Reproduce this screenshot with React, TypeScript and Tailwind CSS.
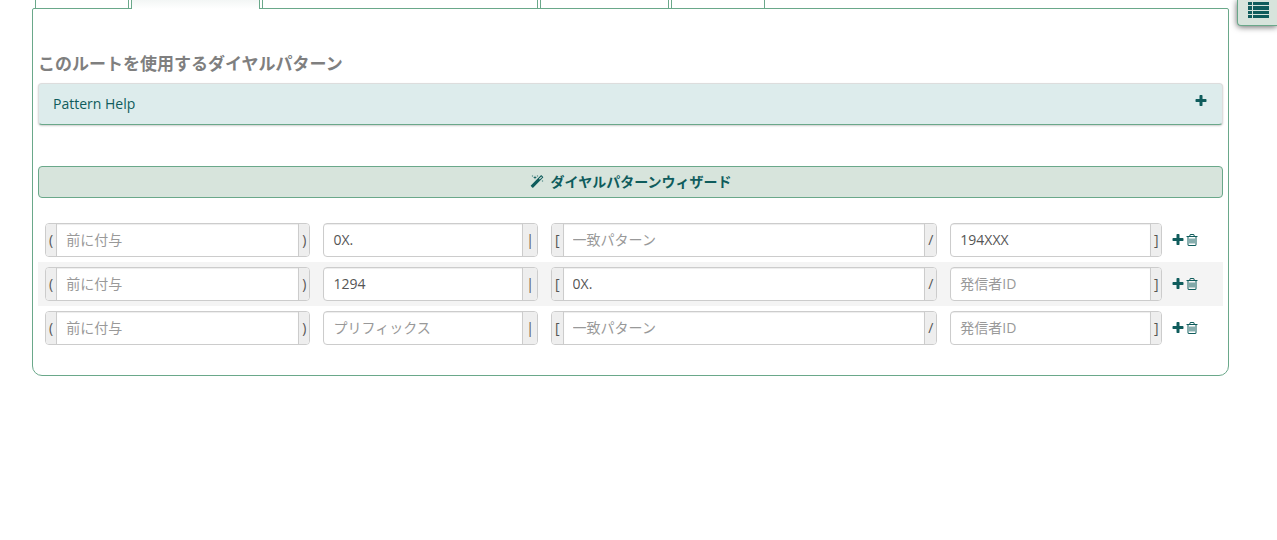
import React from "react";

interface IconProps {
  className?: string;
}

const PlusIcon: React.FC<IconProps> = ({ className }) => (
  <svg className={className} viewBox="0 0 1792 1792" fill="currentColor" aria-hidden="true">
    <path d="M1600 736v192q0 40-28 68t-68 28h-416v416q0 40-28 68t-68 28h-192q-40 0-68-28t-28-68v-416h-416q-40 0-68-28t-28-68v-192q0-40 28-68t68-28h416v-416q0-40 28-68t68-28h192q40 0 68 28t28 68v416h416q40 0 68 28t28 68z" />
  </svg>
);

const TrashIcon: React.FC<IconProps> = ({ className }) => (
  <svg className={className} viewBox="0 0 1792 1792" fill="currentColor" aria-hidden="true">
    <path d="M704 736v576q0 14-9 23t-23 9h-64q-14 0-23-9t-9-23v-576q0-14 9-23t23-9h64q14 0 23 9t9 23zm256 0v576q0 14-9 23t-23 9h-64q-14 0-23-9t-9-23v-576q0-14 9-23t23-9h64q14 0 23 9t9 23zm256 0v576q0 14-9 23t-23 9h-64q-14 0-23-9t-9-23v-576q0-14 9-23t23-9h64q14 0 23 9t9 23zm128 724v-948h-896v948q0 22 7 40.5t14.5 27 10.5 8.5h832q3 0 10.5-8.5t14.5-27 7-40.5zm-672-1076h448l-48-117q-7-9-17-11h-317q-10 2-17 11zm928 32v64q0 14-9 23t-23 9h-96v948q0 83-47 143.5t-113 60.5h-832q-66 0-113-58.5t-47-141.5v-952h-96q-14 0-23-9t-9-23v-64q0-14 9-23t23-9h309l70-167q15-37 54-63t79-26h320q40 0 79 26t54 63l70 167h309q14 0 23 9t9 23z" />
  </svg>
);

const MagicIcon: React.FC<IconProps> = ({ className }) => (
  <svg className={className} viewBox="0 0 1792 1792" fill="currentColor" aria-hidden="true">
    <path d="M1254 581l293-293-107-107-293 293zm447-293q0 27-18 45l-1286 1286q-18 18-45 18t-45-18l-198-198q-18-18-18-45t18-45l1286-1286q18-18 45-18t45 18l198 198q18 18 18 45zm-1351-190l98 30-98 30-30 98-30-98-98-30 98-30 30-98zm350 162l196 60-196 60-60 196-60-196-196-60 196-60 60-196zm930 478l98 30-98 30-30 98-30-98-98-30 98-30 30-98zm-640-640l98 30-98 30-30 98-30-98-98-30 98-30 30-98z" />
  </svg>
);

const ListIcon: React.FC<IconProps> = ({ className }) => (
  <svg className={className} viewBox="0 0 21 16" fill="currentColor" aria-hidden="true">
    <path d="M0 0h4v3H0zM5 0h16v3H5zM0 4h4v4H0zM5 4h16v4H5zM0 9h4v3H0zM5 9h16v3H5zM0 13h4v3H0zM5 13h16v3H5z" />
  </svg>
);

interface FieldProps {
  label: string;
  value: string;
  before?: string;
  after: string;
}

const Field: React.FC<FieldProps> = ({ label, value, before, after }) => (
  <td className="py-[5px] pl-[7px] pr-1.5">
    <div className="flex h-[34px] overflow-hidden rounded border border-[#ccc] bg-white">
      {before && (
        <span className="flex items-center border-r border-[#ccc] bg-[#eee] px-[3px]">{before}</span>
      )}
      <input
        type="text"
        aria-label={label}
        placeholder={label}
        defaultValue={value}
        className="w-0 min-w-0 flex-1 px-[9px] shadow-[inset_0_1px_1px_rgba(0,0,0,0.075)] outline-none placeholder:text-[#999]"
      />
      <span className="flex items-center border-l border-[#ccc] bg-[#eee] px-[3px]">{after}</span>
    </div>
  </td>
);

const tabs = [
  { name: "tab-1", width: "w-[94px]", active: false },
  { name: "tab-2", width: "w-[129px]", active: true },
  { name: "tab-3", width: "w-[276px]", active: false },
  { name: "tab-4", width: "w-[129px]", active: false },
  { name: "tab-5", width: "w-[94px]", active: false },
];

const patterns = [
  { prepend: "", prefix: "0X.", match: "", callerId: "194XXX" },
  { prepend: "", prefix: "1294", match: "0X.", callerId: "" },
  { prepend: "", prefix: "", match: "", callerId: "" },
];

const App: React.FC = () => {
  return (
    <div className="relative min-h-screen bg-white pl-8 pr-12 font-['Open_Sans','Noto_Sans_CJK_JP',sans-serif] text-sm text-[#555]">
      {/* Tabs */}
      <div role="tablist" className="flex h-2 gap-[2px] pl-[3px]">
        {tabs.map((tab) => (
          <button
            key={tab.name}
            type="button"
            role="tab"
            aria-label={tab.name}
            aria-selected={tab.active}
            className={
              tab.active
                ? `${tab.width} z-10 h-[9px] border-x border-[#6aa88a] bg-linear-to-b from-[#f3f6f5] to-white`
                : `${tab.width} h-2 border-x border-[#6aa88a] bg-white`
            }
          />
        ))}
      </div>

      {/* Side menu toggle */}
      <button
        type="button"
        aria-label="Menu"
        className="absolute right-0 top-0 h-[26px] w-[40px] rounded-bl border-b border-l border-[#6aa88a] bg-[#d7e4dc] pl-[10px] pb-2 text-[#0f5c5c] shadow-[0_1px_6px_rgba(0,0,0,0.6)]"
      >
        <ListIcon className="mt-[2px] h-4 w-[21px]" />
      </button>

      <main className="rounded-b-[10px] rounded-t-[2px] border border-[#6aa88a] px-[5px] pb-[25px] pt-[43px]">
        <h3 className="text-[17px] font-bold leading-6 text-[#7f7f7f]">
          このルートを使用するダイヤルパターン
        </h3>

        <button
          type="button"
          className="mt-[7px] flex h-[42px] w-full items-center justify-between rounded border border-[#ddd] border-b-[#6aa88a] bg-[#ddecec] px-[14px] text-[#0f5c5c] shadow-[0_1px_2px_rgba(0,0,0,0.2)]"
        >
          Pattern Help
          <PlusIcon className="mb-1.5 h-[14px] w-[14px]" />
        </button>

        <button
          type="button"
          className="mt-[41px] flex h-8 w-full items-center justify-center gap-[7px] rounded border border-[#6aa88a] bg-[#d7e4dc] font-bold text-[#0f5c5c]"
        >
          <MagicIcon className="h-[14px] w-[14px]" />
          ダイヤルパターンウィザード
        </button>

        <table className="mt-5 w-full table-fixed">
          <colgroup>
            <col className="w-[23.5%]" />
            <col className="w-[19.2%]" />
            <col className="w-[33.7%]" />
            <col className="w-[19%]" />
            <col />
          </colgroup>
          <tbody>
            {patterns.map((row, i) => (
              <tr key={i} className="even:bg-[#f4f4f4]">
                <Field label="前に付与" value={row.prepend} before="(" after=")" />
                <Field label="プリフィックス" value={row.prefix} after="|" />
                <Field label="一致パターン" value={row.match} before="[" after="/" />
                <Field label="発信者ID" value={row.callerId} after="]" />
                <td className="pl-[3px] text-[#0f5c5c]">
                  <div className="flex">
                    <button type="button" aria-label="Add">
                      <PlusIcon className="h-[14px] w-[14px]" />
                    </button>
                    <button type="button" aria-label="Delete">
                      <TrashIcon className="h-[14px] w-[14px]" />
                    </button>
                  </div>
                </td>
              </tr>
            ))}
          </tbody>
        </table>
      </main>
    </div>
  );
};

export default App;
